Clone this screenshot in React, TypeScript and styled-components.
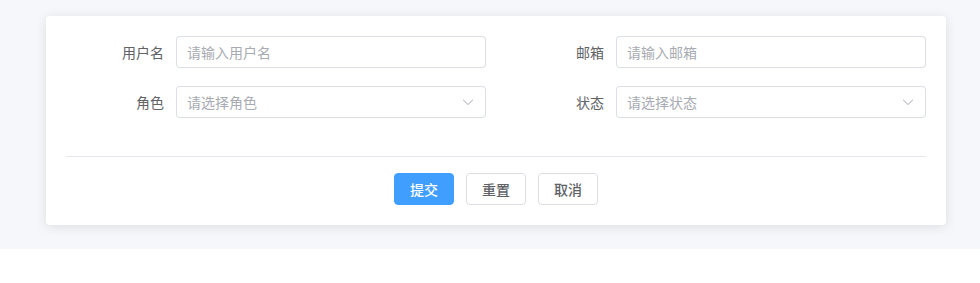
import React, { FunctionComponent } from 'react';
import styled, { createGlobalStyle } from 'styled-components';

const GlobalStyle = createGlobalStyle`
  html, body {
    margin: 0;
    padding: 0;
    background: #ffffff;
  }
  body {
    font-family: "Noto Sans CJK SC", "Noto Sans", "Liberation Sans", sans-serif;
    font-size: 14px;
    color: #606266;
  }
`;

const Page_ = styled.div`
  background: #f5f7fa;
  padding: 16px 34px 24px 46px;
`;

const Card_ = styled.div`
  background: #ffffff;
  border-radius: 4px;
  box-shadow: 0 2px 12px rgba(0, 0, 0, 0.1);
  box-sizing: border-box;
  padding: 20px;
  width: 900px;
`;

const Grid_ = styled.div`
  display: grid;
  grid-template-columns: 1fr 1fr;
  column-gap: 20px;
  row-gap: 18px;
  margin-right: 0;
`;

const Item_ = styled.div`
  align-items: center;
  display: flex;
  height: 32px;
  padding-right: 0;
`;

const Label_ = styled.label`
  box-sizing: border-box;
  color: #606266;
  flex: 0 0 110px;
  font-size: 14px;
  line-height: 32px;
  padding-right: 12px;
  text-align: right;
`;

const Field_ = styled.div`
  align-items: center;
  background: #ffffff;
  border-radius: 4px;
  box-shadow: 0 0 0 1px #dcdfe6 inset;
  box-sizing: border-box;
  display: flex;
  flex: 1;
  height: 32px;
  padding: 0 11px;
`;

const Input_ = styled.input`
  background: transparent;
  border: none;
  color: #606266;
  flex: 1;
  font-family: inherit;
  font-size: 14px;
  height: 30px;
  outline: none;
  padding: 0;

  &::placeholder {
    color: #a8abb2;
  }
`;

const Placeholder_ = styled.span`
  color: #a8abb2;
  flex: 1;
  font-size: 14px;
`;

const Divider_ = styled.div`
  border-top: 1px solid #e4e7ed;
  margin: 38px 0 16px;
`;

const Actions_ = styled.div`
  display: flex;
  gap: 12px;
  justify-content: center;
`;

const Button_ = styled.button<{ $primary?: boolean }>`
  background: ${p => (p.$primary ? '#409eff' : '#ffffff')};
  border: 1px solid ${p => (p.$primary ? '#409eff' : '#dcdfe6')};
  border-radius: 4px;
  box-sizing: border-box;
  color: ${p => (p.$primary ? '#ffffff' : '#606266')};
  cursor: pointer;
  font-family: inherit;
  font-size: 14px;
  font-weight: 500;
  height: 32px;
  padding: 0;
  width: 60px;
`;

const Chevron: FunctionComponent = () => (
  <svg width="14" height="14" viewBox="0 0 1024 1024" fill="#a8abb2">
    <path d="M831.872 340.864 512 652.672 192.128 340.864a30.592 30.592 0 0 0-42.752 0 29.12 29.12 0 0 0 0 41.6L489.664 714.24a32 32 0 0 0 44.672 0l340.288-331.712a29.12 29.12 0 0 0 0-41.728 30.592 30.592 0 0 0-42.752 0z" />
  </svg>
);

const TextItem: FunctionComponent<{ label: string; placeholder: string }> = ({ label, placeholder }) => (
  <Item_>
    <Label_>{label}</Label_>
    <Field_>
      <Input_ placeholder={placeholder} />
    </Field_>
  </Item_>
);

const SelectItem: FunctionComponent<{ label: string; placeholder: string }> = ({ label, placeholder }) => (
  <Item_>
    <Label_>{label}</Label_>
    <Field_>
      <Placeholder_>{placeholder}</Placeholder_>
      <Chevron />
    </Field_>
  </Item_>
);

const App: FunctionComponent = () => (
  <>
    <GlobalStyle />
    <Page_>
      <Card_>
        <Grid_>
          <TextItem label="用户名" placeholder="请输入用户名" />
          <TextItem label="邮箱" placeholder="请输入邮箱" />
          <SelectItem label="角色" placeholder="请选择角色" />
          <SelectItem label="状态" placeholder="请选择状态" />
        </Grid_>
        <Divider_ />
        <Actions_>
          <Button_ $primary>提交</Button_>
          <Button_>重置</Button_>
          <Button_>取消</Button_>
        </Actions_>
      </Card_>
    </Page_>
  </>
);

export default App;
